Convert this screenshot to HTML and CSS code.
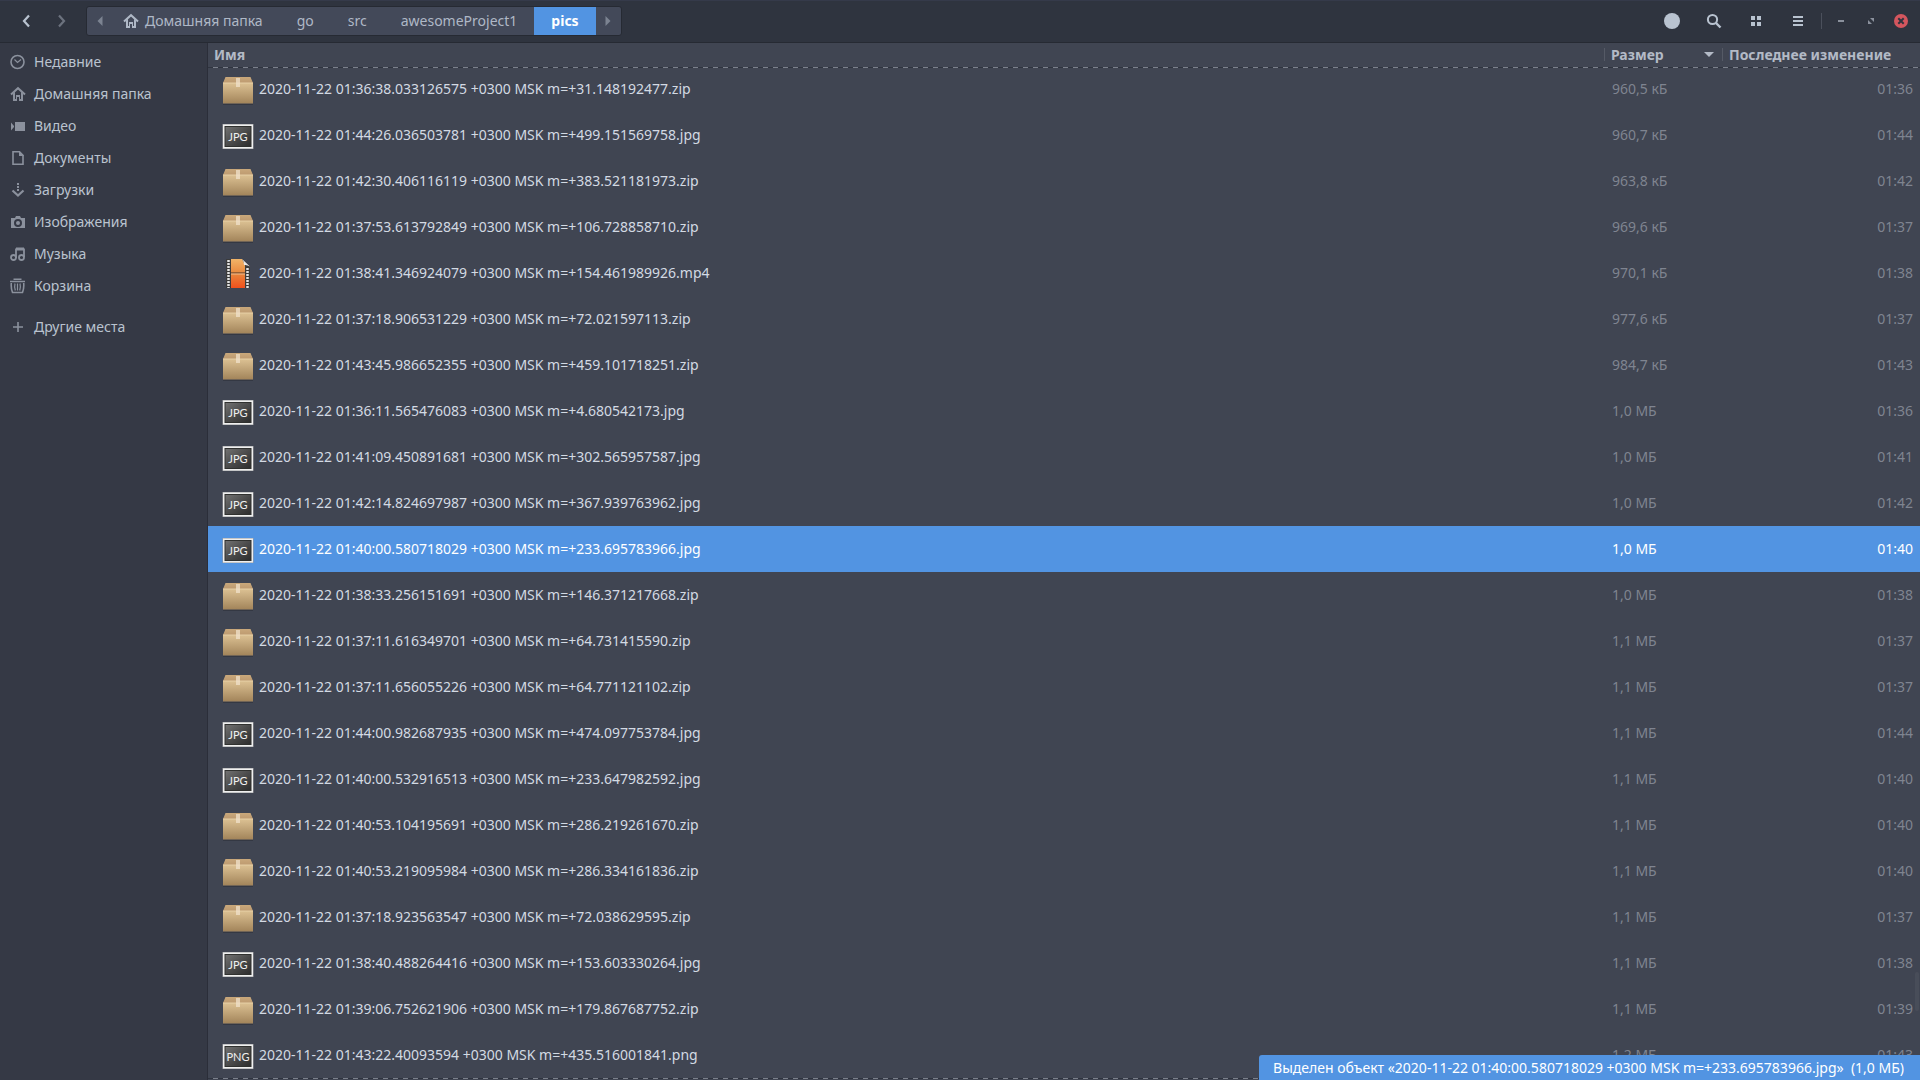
FILE: index.html
```
<!DOCTYPE html>
<html lang="ru">
<head>
    <meta charset="UTF-8">
    <meta name="viewport" content="width=device-width, initial-scale=1.0">
    <title>pics</title>
    <link rel="stylesheet" href="styles.css">
</head>
<body>

<svg class="defs" width="0" height="0" aria-hidden="true">
    <defs>
        <linearGradient id="box-front" x1="0" y1="0" x2="0" y2="1">
            <stop offset="0" stop-color="#dcc193"/>
            <stop offset="1" stop-color="#a2845a"/>
        </linearGradient>
        <linearGradient id="box-top" x1="0" y1="0" x2="0" y2="1">
            <stop offset="0" stop-color="#c9a87b"/>
            <stop offset="1" stop-color="#bd9a70"/>
        </linearGradient>
        <linearGradient id="photo" x1="0" y1="0" x2="1" y2="1">
            <stop offset="0" stop-color="#737373"/>
            <stop offset="0.5" stop-color="#4c4c4c"/>
            <stop offset="1" stop-color="#2c2c2c"/>
        </linearGradient>
        <linearGradient id="film" x1="0" y1="0" x2="0" y2="1">
            <stop offset="0" stop-color="#f0b468"/>
            <stop offset="0.5" stop-color="#e9873c"/>
            <stop offset="1" stop-color="#f0501c"/>
        </linearGradient>
        <symbol id="home" viewBox="0 0 16 16">
            <path d="M1 8.6 8 2.2l7 6.4" fill="none" stroke="currentColor" stroke-width="2"/>
            <path d="M3 7.5V15h4v-4h2v4h4V7.5l-2-1.8V13h-1V9H6v4H5V5.7z" fill="currentColor"/>
        </symbol>
        <symbol id="zip" viewBox="0 0 32 32">
            <path d="M1 31h30v1H1z" fill="#22252c" opacity="0.4"/>
            <path d="M3.5 4h25L31 10H1z" fill="url(#box-top)"/>
            <path d="M1 10h30v20.500H1z" fill="url(#box-front)"/>
            <path d="M1 10h30" stroke="#e6cfa6" stroke-width="1"/>
            <path d="M14 5h4v9h-4z" fill="#f0e2cb" opacity="0.75"/>
        </symbol>
        <symbol id="photo-frame" viewBox="0 0 32 32">
            <rect x="0.500" y="5" width="31" height="25" fill="#9b9c9e"/>
            <rect x="1" y="5.500" width="30" height="24" fill="#efefef"/>
            <rect x="3" y="7.500" width="26" height="20" fill="url(#photo)" stroke="#30312f"/>
        </symbol>
        <symbol id="jpg" viewBox="0 0 32 32">
            <use href="#photo-frame"/>
            <text class="photo-text" x="16" y="22">JPG</text>
        </symbol>
        <symbol id="png" viewBox="0 0 32 32">
            <use href="#photo-frame"/>
            <text class="photo-text" x="16" y="22">PNG</text>
        </symbol>
        <symbol id="mp4" viewBox="0 0 32 32">
            <path d="M4 2h16.500l7.500 7v22H4z" fill="#3b3b3b"/>
            <path d="M9 2h11l3 6v23H9z" fill="url(#film)"/>
            <path d="M9 16h14" stroke="#4a3426" stroke-width="1"/>
            <path d="M9 17h14" stroke="#f3bc8c" stroke-width="1"/>
            <path d="M6.500 3v28M25.500 11v20" stroke="#e3e3e3" stroke-width="2.500" stroke-dasharray="2 1"/>
            <path d="M20 2l8 7.500q-3-2-6-1.500 0-3.500-2-6z" fill="#e8e8e8"/>
        </symbol>
    </defs>
</svg>

<header class="headerbar">
    <div class="history">
        <button class="icon-btn" aria-label="Назад">
            <svg width="16" height="16" viewBox="0 0 16 16"><path d="M11 2.500 6 8l5 5.500" fill="none" stroke="currentColor" stroke-width="2.200"/></svg>
        </button>
        <button class="icon-btn dim" aria-label="Вперёд">
            <svg width="16" height="16" viewBox="0 0 16 16"><path d="M6 2.500 11 8l-5 5.500" fill="none" stroke="currentColor" stroke-width="2.200"/></svg>
        </button>
    </div>
    <nav class="pathbar">
        <button class="path-arrow" aria-label="Предыдущие"><svg width="6" height="10" viewBox="0 0 6 10"><path d="M5.500 0v10L.5 5z" fill="currentColor"/></svg></button>
        <button class="path-home"><svg width="16" height="16"><use href="#home"/></svg>Домашняя папка</button>
        <button>go</button>
        <button>src</button>
        <button>awesomeProject1</button>
        <button class="current">pics</button>
        <button class="path-arrow" aria-label="Следующие"><svg width="6" height="10" viewBox="0 0 6 10"><path d="M.5 0v10l5-5z" fill="currentColor"/></svg></button>
    </nav>
    <div class="tools">
        <button class="icon-btn" aria-label="Операции"><svg width="16" height="16" viewBox="0 0 16 16"><circle cx="8" cy="8" r="8" fill="#b9c3d0"/></svg></button>
        <button class="icon-btn" aria-label="Поиск"><svg width="16" height="16" viewBox="0 0 16 16"><circle cx="6.500" cy="6.500" r="4.600" fill="none" stroke="currentColor" stroke-width="2"/><path d="M10 10l4.500 4.500" stroke="currentColor" stroke-width="2.400"/></svg></button>
        <button class="icon-btn" aria-label="Вид значками"><svg width="16" height="16" viewBox="0 0 16 16"><path d="M3 3h4v4H3zM9 3h4v4H9zM3 9h4v4H3zM9 9h4v4H9z" fill="currentColor"/></svg></button>
        <button class="icon-btn" aria-label="Меню"><svg width="16" height="16" viewBox="0 0 16 16"><path d="M3 3h10v2H3zM3 7h10v2H3zM3 11h10v2H3z" fill="currentColor"/></svg></button>
    </div>
    <div class="window-btns">
        <button aria-label="Свернуть"><svg width="16" height="16" viewBox="0 0 16 16"><path d="M5 7h6v2H5z" fill="currentColor"/></svg></button>
        <button aria-label="Восстановить"><svg width="16" height="16" viewBox="0 0 16 16"><path d="M7 5h4v4zM5 7l4 4H5z" fill="currentColor"/></svg></button>
        <button aria-label="Закрыть"><svg width="16" height="16" viewBox="0 0 16 16"><circle cx="8" cy="8" r="7" fill="#d4565e"/><path d="M5.300 5.300l5.400 5.400M10.700 5.300l-5.400 5.400" stroke="#2f343f" stroke-width="2"/></svg></button>
    </div>
</header>

<div class="window">
    <aside class="sidebar">
        <a href="#"><svg width="16" height="16" viewBox="0 0 16 16"><circle cx="7.500" cy="8" r="6.500" fill="none" stroke="currentColor" stroke-width="1.600"/><path d="M4.500 5.500 7.500 8.500l3.500-3" fill="none" stroke="currentColor" stroke-width="1.200"/></svg>Недавние</a>
        <a href="#"><svg width="16" height="16"><use href="#home"/></svg>Домашняя папка</a>
        <a href="#"><svg width="16" height="16" viewBox="0 0 16 16"><path d="M5 4h10v9H5zM1 4.500 4 8v1l-3 3.500z" fill="currentColor"/></svg>Видео</a>
        <a href="#"><svg width="16" height="16" viewBox="0 0 16 16"><path d="M3 1.800h6.500L13 5.300v9H3z" fill="none" stroke="currentColor" stroke-width="1.600"/><path d="M9 1v5h5z" fill="currentColor"/></svg>Документы</a>
        <a href="#"><svg width="16" height="16" viewBox="0 0 16 16"><path d="M7 1h2v2H7zM7 4h2v2H7zM7 7h2v2H7z" fill="currentColor"/><path d="M2.500 8.500 8 13.500l5.500-5" fill="none" stroke="currentColor" stroke-width="2.200"/></svg>Загрузки</a>
        <a href="#"><svg width="16" height="16" viewBox="0 0 16 16"><path fill-rule="evenodd" d="M1 4h4l1-2h4l1 2h4v10H1zM8 5a4 4 0 1 0 0 8 4 4 0 0 0 0-8z" fill="currentColor"/><circle cx="8" cy="9" r="2" fill="currentColor"/></svg>Изображения</a>
        <a href="#"><svg width="16" height="16" viewBox="0 0 16 16"><path d="M6 12V3.500h8V11M6 2.500h8" fill="none" stroke="currentColor" stroke-width="1.800"/><circle cx="3.500" cy="11.500" r="2.500" fill="none" stroke="currentColor" stroke-width="1.800"/><circle cx="11.500" cy="11.500" r="2.500" fill="none" stroke="currentColor" stroke-width="1.800"/></svg>Музыка</a>
        <a href="#"><svg width="16" height="16" viewBox="0 0 16 16"><path d="M3.500 1.200h8M0 3.500h15" stroke="currentColor" stroke-width="1.600"/><path d="M1.300 5q-.5 5 1.200 9.500h10Q14.200 10 13.700 5" fill="none" stroke="currentColor" stroke-width="1.600"/><path d="M5 5.500q-.8 3 .3 7M7.500 5.500v7M10 5.500q.8 3-.3 7" fill="none" stroke="currentColor" stroke-width="1.200"/></svg>Корзина</a>
        <a href="#" class="other"><svg width="16" height="16" viewBox="0 0 16 16"><path d="M8 3v10M3 8h10" stroke="currentColor" stroke-width="1.600"/></svg>Другие места</a>
    </aside>

    <main class="files">
        <table>
            <colgroup>
                <col>
                <col class="col-size">
                <col class="col-date">
            </colgroup>
            <thead>
                <tr>
                    <th>Имя</th>
                    <th><span class="sorted">Размер<svg width="10" height="5" viewBox="0 0 10 5"><path d="M0 0h10L5 5z" fill="currentColor"/></svg></span></th>
                    <th>Последнее изменение</th>
                </tr>
            </thead>
            <tbody>
                <tr><td><svg><use href="#zip"/></svg>2020-11-22 01:36:38.033126575 +0300 MSK m=+31.148192477.zip</td><td>960,5 кБ</td><td>01:36</td></tr>
                <tr><td><svg><use href="#jpg"/></svg>2020-11-22 01:44:26.036503781 +0300 MSK m=+499.151569758.jpg</td><td>960,7 кБ</td><td>01:44</td></tr>
                <tr><td><svg><use href="#zip"/></svg>2020-11-22 01:42:30.406116119 +0300 MSK m=+383.521181973.zip</td><td>963,8 кБ</td><td>01:42</td></tr>
                <tr><td><svg><use href="#zip"/></svg>2020-11-22 01:37:53.613792849 +0300 MSK m=+106.728858710.zip</td><td>969,6 кБ</td><td>01:37</td></tr>
                <tr><td><svg><use href="#mp4"/></svg>2020-11-22 01:38:41.346924079 +0300 MSK m=+154.461989926.mp4</td><td>970,1 кБ</td><td>01:38</td></tr>
                <tr><td><svg><use href="#zip"/></svg>2020-11-22 01:37:18.906531229 +0300 MSK m=+72.021597113.zip</td><td>977,6 кБ</td><td>01:37</td></tr>
                <tr><td><svg><use href="#zip"/></svg>2020-11-22 01:43:45.986652355 +0300 MSK m=+459.101718251.zip</td><td>984,7 кБ</td><td>01:43</td></tr>
                <tr><td><svg><use href="#jpg"/></svg>2020-11-22 01:36:11.565476083 +0300 MSK m=+4.680542173.jpg</td><td>1,0 МБ</td><td>01:36</td></tr>
                <tr><td><svg><use href="#jpg"/></svg>2020-11-22 01:41:09.450891681 +0300 MSK m=+302.565957587.jpg</td><td>1,0 МБ</td><td>01:41</td></tr>
                <tr><td><svg><use href="#jpg"/></svg>2020-11-22 01:42:14.824697987 +0300 MSK m=+367.939763962.jpg</td><td>1,0 МБ</td><td>01:42</td></tr>
                <tr class="selected"><td><svg><use href="#jpg"/></svg>2020-11-22 01:40:00.580718029 +0300 MSK m=+233.695783966.jpg</td><td>1,0 МБ</td><td>01:40</td></tr>
                <tr><td><svg><use href="#zip"/></svg>2020-11-22 01:38:33.256151691 +0300 MSK m=+146.371217668.zip</td><td>1,0 МБ</td><td>01:38</td></tr>
                <tr><td><svg><use href="#zip"/></svg>2020-11-22 01:37:11.616349701 +0300 MSK m=+64.731415590.zip</td><td>1,1 МБ</td><td>01:37</td></tr>
                <tr><td><svg><use href="#zip"/></svg>2020-11-22 01:37:11.656055226 +0300 MSK m=+64.771121102.zip</td><td>1,1 МБ</td><td>01:37</td></tr>
                <tr><td><svg><use href="#jpg"/></svg>2020-11-22 01:44:00.982687935 +0300 MSK m=+474.097753784.jpg</td><td>1,1 МБ</td><td>01:44</td></tr>
                <tr><td><svg><use href="#jpg"/></svg>2020-11-22 01:40:00.532916513 +0300 MSK m=+233.647982592.jpg</td><td>1,1 МБ</td><td>01:40</td></tr>
                <tr><td><svg><use href="#zip"/></svg>2020-11-22 01:40:53.104195691 +0300 MSK m=+286.219261670.zip</td><td>1,1 МБ</td><td>01:40</td></tr>
                <tr><td><svg><use href="#zip"/></svg>2020-11-22 01:40:53.219095984 +0300 MSK m=+286.334161836.zip</td><td>1,1 МБ</td><td>01:40</td></tr>
                <tr><td><svg><use href="#zip"/></svg>2020-11-22 01:37:18.923563547 +0300 MSK m=+72.038629595.zip</td><td>1,1 МБ</td><td>01:37</td></tr>
                <tr><td><svg><use href="#jpg"/></svg>2020-11-22 01:38:40.488264416 +0300 MSK m=+153.603330264.jpg</td><td>1,1 МБ</td><td>01:38</td></tr>
                <tr><td><svg><use href="#zip"/></svg>2020-11-22 01:39:06.752621906 +0300 MSK m=+179.867687752.zip</td><td>1,1 МБ</td><td>01:39</td></tr>
                <tr><td><svg><use href="#png"/></svg>2020-11-22 01:43:22.40093594 +0300 MSK m=+435.516001841.png</td><td>1,2 МБ</td><td>01:43</td></tr>
            </tbody>
        </table>
        <div class="scroll-thumb"></div>
        <div class="status">Выделен объект «2020-11-22 01:40:00.580718029 +0300 MSK m=+233.695783966.jpg»&nbsp; (1,0 МБ)</div>
    </main>
</div>

</body>
</html>
```
FILE: styles.css
```
* {
    box-sizing: border-box;
}
body {
    margin: 0;
    height: 100vh;
    display: flex;
    flex-direction: column;
    overflow: hidden;
    font-family: "Noto Sans", "Open Sans", sans-serif;
    font-size: 14px;
    line-height: 20px;
    color: #d3dae3;
    background: #404552;
}
.defs {
    position: absolute;
}
svg {
    flex: none;
}
button {
    font: inherit;
    color: #afb8c6;
    background: none;
    border: none;
    padding: 0;
    display: flex;
    align-items: center;
    justify-content: center;
    cursor: pointer;
}

/* header bar */
.headerbar {
    flex: none;
    height: 43px;
    display: flex;
    align-items: center;
    padding: 0 8px 1px;
    background: #2f343f;
    border-top: 1px solid #353a4a;
    border-bottom: 1px solid #262a33;
}
.history {
    display: flex;
    margin-right: 8px;
}
.icon-btn {
    width: 35px;
    height: 30px;
    color: #b9c3d0;
}
.icon-btn.dim {
    color: #6c727e;
}
.pathbar {
    display: flex;
    height: 30px;
    border: 1px solid #262a33;
    border-radius: 3px;
    background: #434959;
}
.pathbar button {
    padding: 0 17px;
}
.pathbar .path-home {
    padding-left: 11px;
    gap: 6px;
}
.pathbar .path-arrow {
    width: 25px;
    padding: 0;
    color: #7c8391;
}
.pathbar .current {
    color: #fff;
    background: #5294e2;
    font-weight: bold;
}
.tools {
    display: flex;
    gap: 7px;
    margin-left: auto;
    padding-right: 6px;
}
.window-btns {
    display: flex;
    gap: 14px;
    padding: 0 3px 0 11px;
    border-left: 1px solid #4b505c;
}
.window-btns button {
    color: #8b919d;
}

/* places */
.window {
    flex: 1;
    min-height: 0;
    display: flex;
}
.sidebar {
    flex: none;
    width: 208px;
    padding-top: 3px;
    background: #353945;
    border-right: 1px solid #2b2e39;
}
.sidebar a {
    display: flex;
    align-items: center;
    gap: 8px;
    height: 32px;
    padding-left: 10px;
    color: #bac3cf;
    text-decoration: none;
}
.sidebar svg {
    color: #8b919d;
}
.sidebar .other {
    margin-top: 9px;
}

/* file list */
.files {
    position: relative;
    flex: 1;
    min-width: 0;
    overflow: hidden;
    background: #404552;
}
.files::before,
.files::after {
    content: "";
    position: absolute;
    left: 0;
    right: 0;
    height: 1px;
    background: repeating-linear-gradient(90deg, #2f343f 0 5px, #7b808b 5px 10px);
}
.files::before {
    top: 24px;
}
.files::after {
    bottom: 1px;
}
table {
    width: 100%;
    table-layout: fixed;
    border-collapse: collapse;
}
.col-size {
    width: 118px;
}
.col-date {
    width: 198px;
}
th {
    height: 23px;
    padding: 0 8px 0 7px;
    text-align: left;
    white-space: nowrap;
    color: #b3bac6;
    background: linear-gradient(#555a66, #555a66) no-repeat left center / 1px 13px;
}
th:first-child {
    padding-left: 6px;
    background: none;
}
.sorted {
    display: flex;
    align-items: center;
    justify-content: space-between;
}
td {
    height: 46px;
    padding: 0 7px 0 8px;
    white-space: nowrap;
    color: #7f8490;
}
td:first-child {
    padding-left: 14px;
    color: #d3dae3;
}
td:last-child {
    text-align: right;
}
td svg {
    width: 32px;
    height: 32px;
    margin-right: 5px;
    vertical-align: -11px;
}
.photo-text {
    font-family: Lato, sans-serif;
    font-size: 11px;
    text-anchor: middle;
    fill: #f0f0f0;
}
.selected,
.selected td,
.selected td:first-child {
    color: #fff;
    background: #5294e2;
}
.scroll-thumb {
    position: absolute;
    right: 1px;
    bottom: 69px;
    width: 4px;
    height: 39px;
    border-radius: 2px;
    background: #484d59;
}
.status {
    position: absolute;
    right: 0;
    bottom: 0;
    z-index: 1;
    height: 25px;
    padding: 3px 16px 2px 14px;
    border-top-left-radius: 3px;
    color: #fff;
    background: #5294e2;
}
```
